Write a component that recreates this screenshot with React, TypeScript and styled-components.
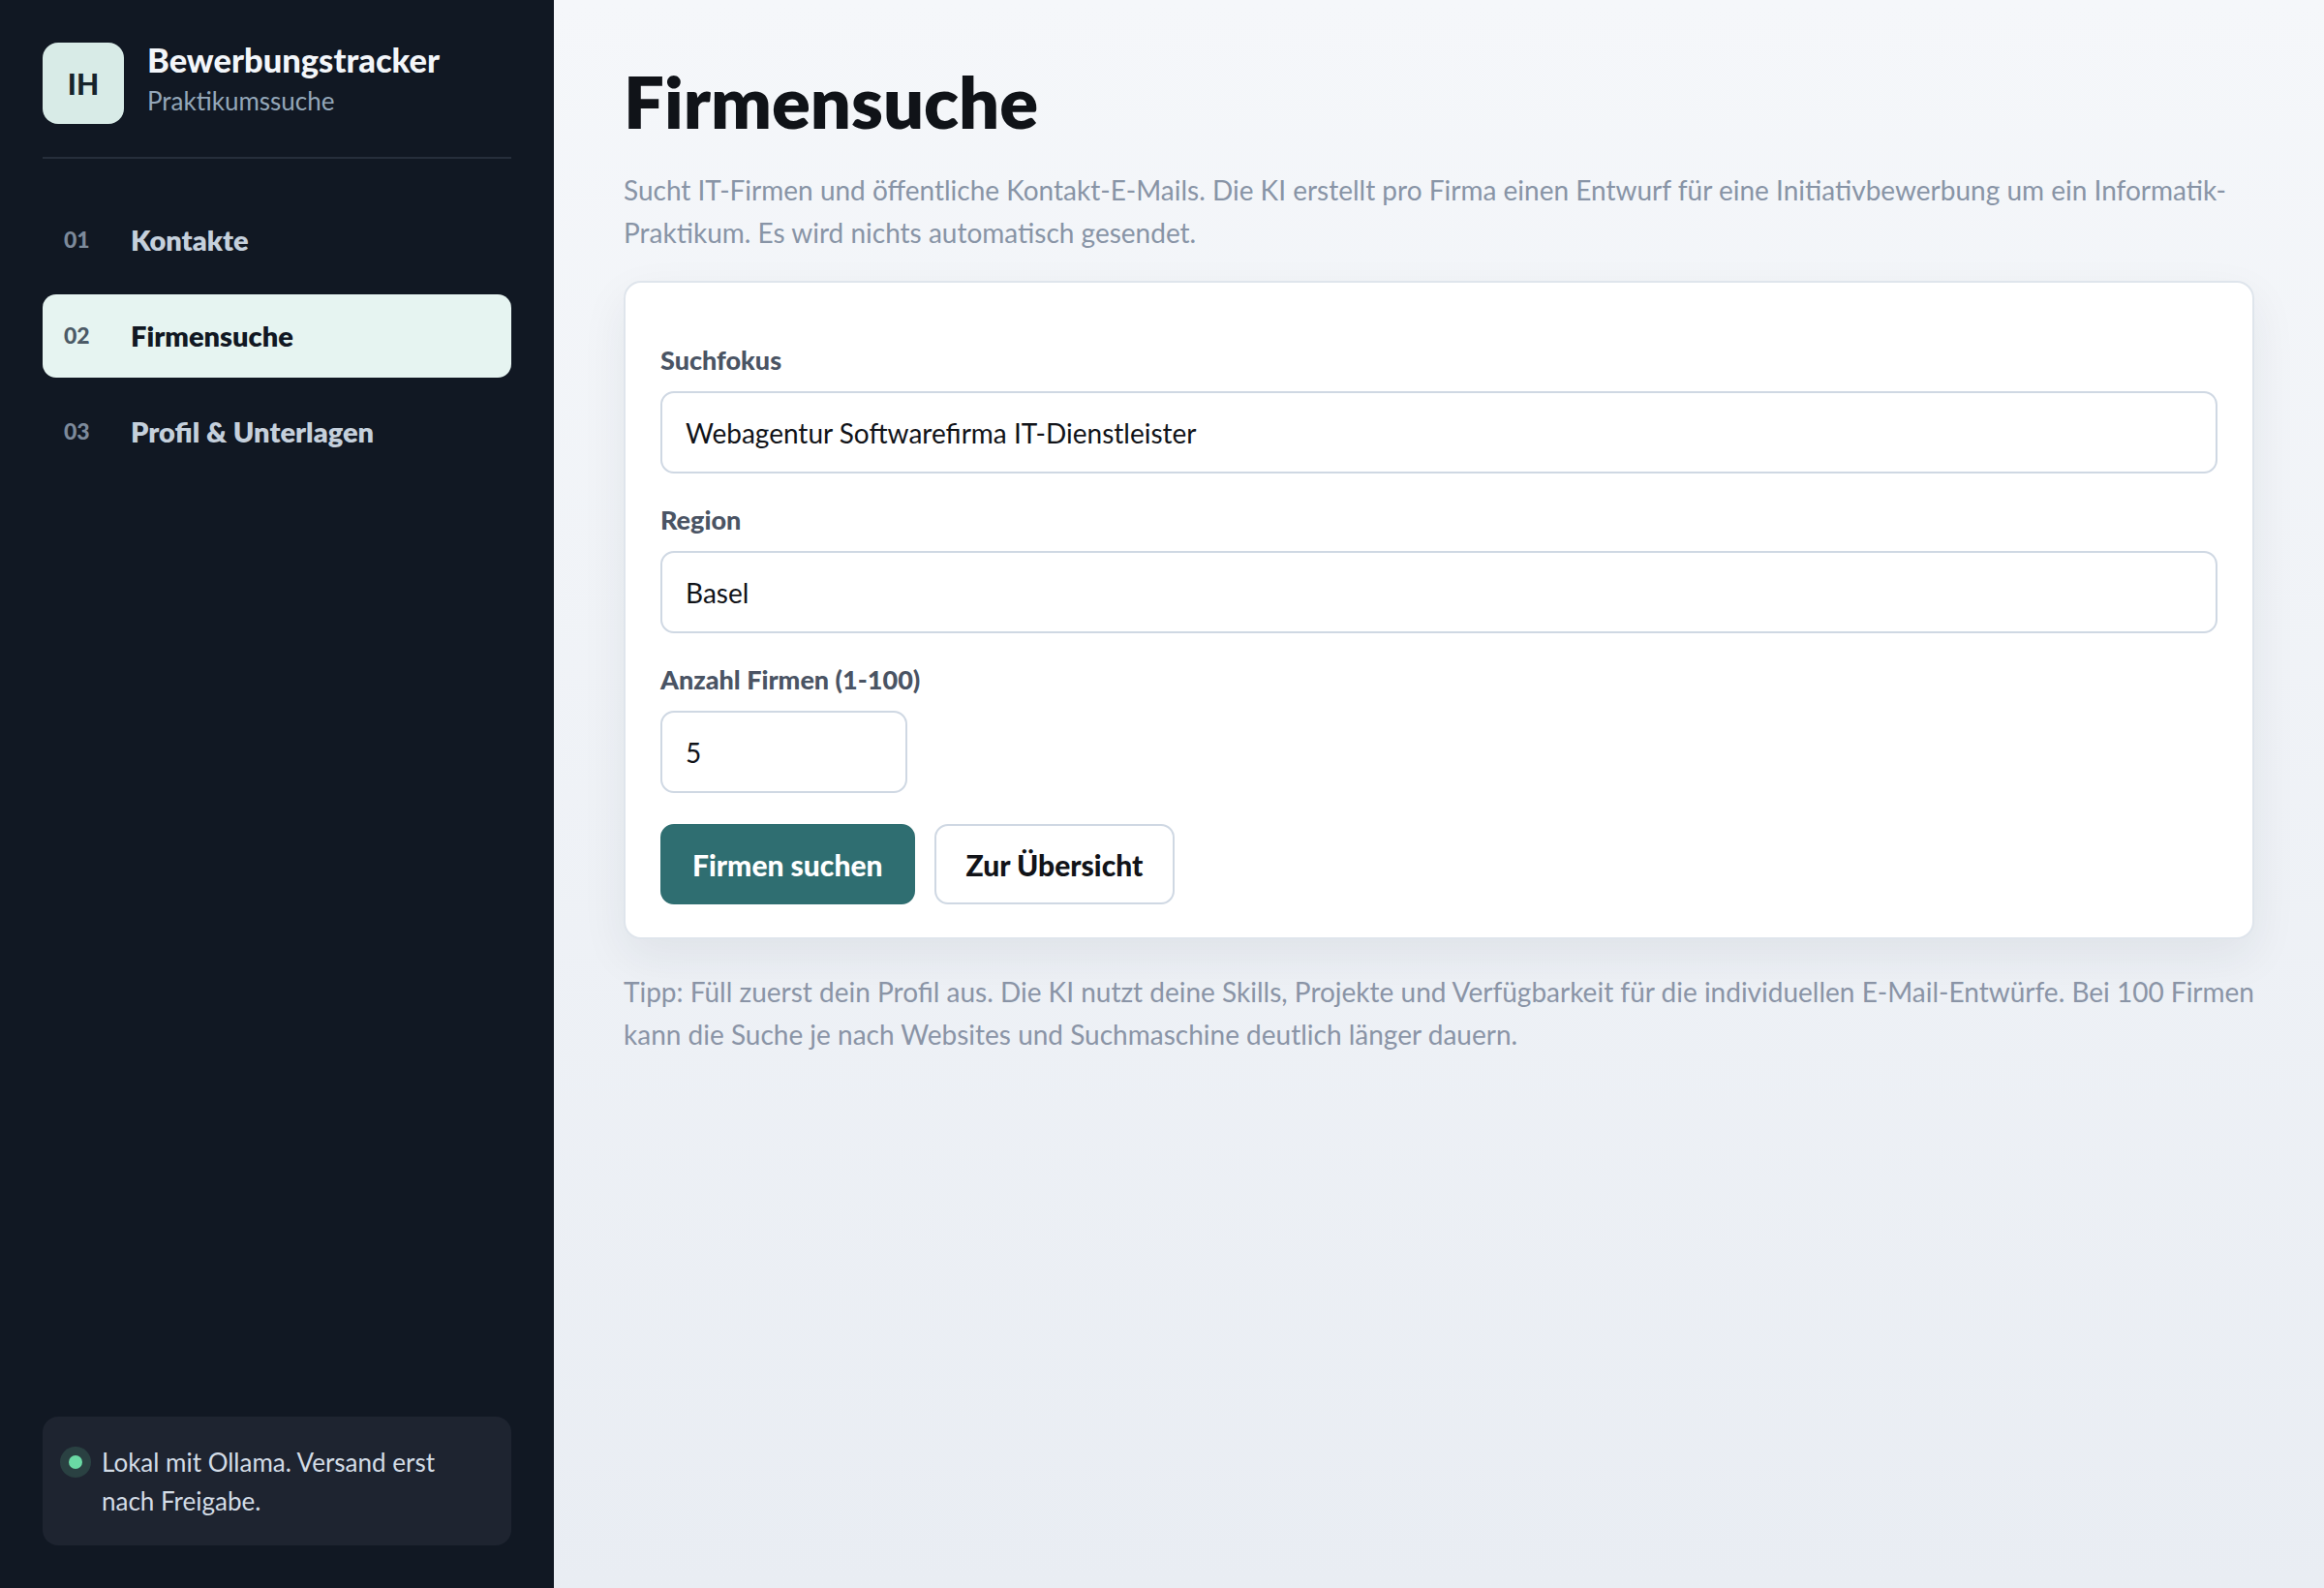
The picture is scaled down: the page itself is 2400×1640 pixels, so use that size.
import React, { useState } from "react";
import styled, { createGlobalStyle } from "styled-components";

const GlobalStyle = createGlobalStyle`
  html, body {
    margin: 0;
    padding: 0;
    height: 100%;
  }
  body {
    font-family: Lato, "Noto Sans", "Liberation Sans", sans-serif;
    -webkit-font-smoothing: antialiased;
  }
  * {
    box-sizing: border-box;
  }
`;

const Layout = styled.div`
  display: flex;
  min-height: 1640px;
  width: 100%;
`;

const Sidebar = styled.aside`
  width: 572px;
  flex-shrink: 0;
  background-color: #111823;
  padding: 44px;
  display: flex;
  flex-direction: column;
`;

const Brand = styled.div`
  display: flex;
  align-items: center;
  gap: 24px;
  padding-bottom: 34px;
  border-bottom: 2px solid #262e3b;
`;

const Logo = styled.div`
  width: 84px;
  height: 84px;
  border-radius: 16px;
  background-color: #d8ebe7;
  color: #16232b;
  font-size: 30px;
  font-weight: 900;
  display: flex;
  align-items: center;
  justify-content: center;
`;

const BrandText = styled.div`
  display: flex;
  flex-direction: column;
  margin-top: -6px;
`;

const BrandTitle = styled.div`
  color: #f3f6fa;
  font-size: 34.5px;
  font-weight: 900;
  line-height: 38px;
`;

const BrandSub = styled.div`
  color: #94a7b9;
  font-size: 26px;
  line-height: 40px;
  margin-top: 3px;
`;

const Nav = styled.nav`
  display: flex;
  flex-direction: column;
  gap: 13px;
  margin-top: 41px;
`;

const NavItem = styled.a<{ $active?: boolean }>`
  display: flex;
  align-items: center;
  height: 86px;
  padding: 0 22px 2px;
  border-radius: 14px;
  cursor: pointer;
  text-decoration: none;
  background-color: ${(p) => (p.$active ? "#e6f4f1" : "transparent")};
`;

const NavNum = styled.span<{ $active?: boolean }>`
  width: 69px;
  flex-shrink: 0;
  font-size: 23px;
  font-weight: 900;
  color: ${(p) => (p.$active ? "#4c5a66" : "#7d8a9b")};
`;

const NavLabel = styled.span<{ $active?: boolean }>`
  font-size: 29px;
  font-weight: 800;
  color: ${(p) => (p.$active ? "#111823" : "#c5d0dc")};
`;

const Status = styled.div`
  margin-top: auto;
  display: flex;
  align-items: flex-start;
  gap: 20px;
  padding: 27px 44px 26px 27px;
  border-radius: 16px;
  background-color: #1e2430;
`;

const Dot = styled.span`
  width: 14px;
  height: 14px;
  flex-shrink: 0;
  margin-top: 13px;
  border-radius: 50%;
  background-color: #6ad9a4;
  box-shadow: 0 0 0 9px rgba(106, 217, 164, 0.16);
`;

const StatusText = styled.p`
  margin: 0;
  color: #d3dce6;
  font-size: 26px;
  line-height: 40px;
`;

const Main = styled.main`
  flex: 1;
  padding: 64px 72px;
  background: linear-gradient(180deg, #f5f7fa 0%, #e9edf3 100%);
`;

const Title = styled.h1`
  margin: 0;
  font-size: 74px;
  line-height: 82px;
  font-weight: 800;
  color: #101318;
`;

const Lead = styled.p`
  margin: 28px 0 28px;
  color: #8894a6;
  font-size: 28px;
  line-height: 44px;
`;

const Card = styled.section`
  background-color: #ffffff;
  border: 2px solid #dfe5ec;
  border-radius: 18px;
  padding: 64px 36px 34px;
  box-shadow: 0 18px 48px rgba(30, 41, 59, 0.07);
  display: flex;
  flex-direction: column;
  gap: 32px;
`;

const Field = styled.label`
  display: flex;
  flex-direction: column;
  gap: 16px;
`;

const FieldLabel = styled.span`
  color: #4a5464;
  font-size: 27px;
  font-weight: 900;
  line-height: 32px;
`;

const Input = styled.input<{ $narrow?: boolean }>`
  width: ${(p) => (p.$narrow ? "255px" : "100%")};
  height: 85px;
  padding: 0 24px;
  border: 2px solid #cfd8e3;
  border-radius: 14px;
  font-family: inherit;
  font-size: 28px;
  color: #111318;
  background-color: #ffffff;
  outline: none;
`;

const Actions = styled.div`
  display: flex;
  gap: 20px;
`;

const Button = styled.button<{ $primary?: boolean }>`
  height: 83px;
  padding: 0 31px;
  border-radius: 14px;
  font-family: inherit;
  font-size: 30px;
  font-weight: 900;
  cursor: pointer;
  border: 2px solid ${(p) => (p.$primary ? "#2f6e71" : "#cfd8e3")};
  background-color: ${(p) => (p.$primary ? "#2f6e71" : "#ffffff")};
  color: ${(p) => (p.$primary ? "#ffffff" : "#111318")};
`;

const Tip = styled.p`
  margin: 32px 0 0;
  color: #8a94a6;
  font-size: 28px;
  line-height: 44px;
`;

const navItems = [
  { num: "01", label: "Kontakte" },
  { num: "02", label: "Firmensuche" },
  { num: "03", label: "Profil & Unterlagen" },
];

const App = () => {
  const [focus, setFocus] = useState("Webagentur Softwarefirma IT-Dienstleister");
  const [region, setRegion] = useState("Basel");
  const [count, setCount] = useState("5");

  return (
    <>
      <GlobalStyle />
      <Layout>
        <Sidebar>
          <Brand>
            <Logo>IH</Logo>
            <BrandText>
              <BrandTitle>Bewerbungstracker</BrandTitle>
              <BrandSub>Praktikumssuche</BrandSub>
            </BrandText>
          </Brand>
          <Nav>
            {navItems.map((item) => {
              const active = item.label === "Firmensuche";
              return (
                <NavItem key={item.num} $active={active}>
                  <NavNum $active={active}>{item.num}</NavNum>
                  <NavLabel $active={active}>{item.label}</NavLabel>
                </NavItem>
              );
            })}
          </Nav>
          <Status>
            <Dot />
            <StatusText>Lokal mit Ollama. Versand erst nach Freigabe.</StatusText>
          </Status>
        </Sidebar>

        <Main>
          <Title>Firmensuche</Title>
          <Lead>
            Sucht IT-Firmen und öffentliche Kontakt-E-Mails. Die KI erstellt pro Firma einen
            Entwurf für eine Initiativbewerbung um ein Informatik-Praktikum. Es wird nichts
            automatisch gesendet.
          </Lead>
          <Card>
            <Field>
              <FieldLabel>Suchfokus</FieldLabel>
              <Input value={focus} onChange={(e) => setFocus(e.target.value)} />
            </Field>
            <Field>
              <FieldLabel>Region</FieldLabel>
              <Input value={region} onChange={(e) => setRegion(e.target.value)} />
            </Field>
            <Field>
              <FieldLabel>Anzahl Firmen (1-100)</FieldLabel>
              <Input $narrow value={count} onChange={(e) => setCount(e.target.value)} />
            </Field>
            <Actions>
              <Button $primary>Firmen suchen</Button>
              <Button>Zur Übersicht</Button>
            </Actions>
          </Card>
          <Tip>
            Tipp: Füll zuerst dein Profil aus. Die KI nutzt deine Skills, Projekte und
            Verfügbarkeit für die individuellen E-Mail-Entwürfe. Bei 100 Firmen kann die Suche je
            nach Websites und Suchmaschine deutlich länger dauern.
          </Tip>
        </Main>
      </Layout>
    </>
  );
};

export default App;
